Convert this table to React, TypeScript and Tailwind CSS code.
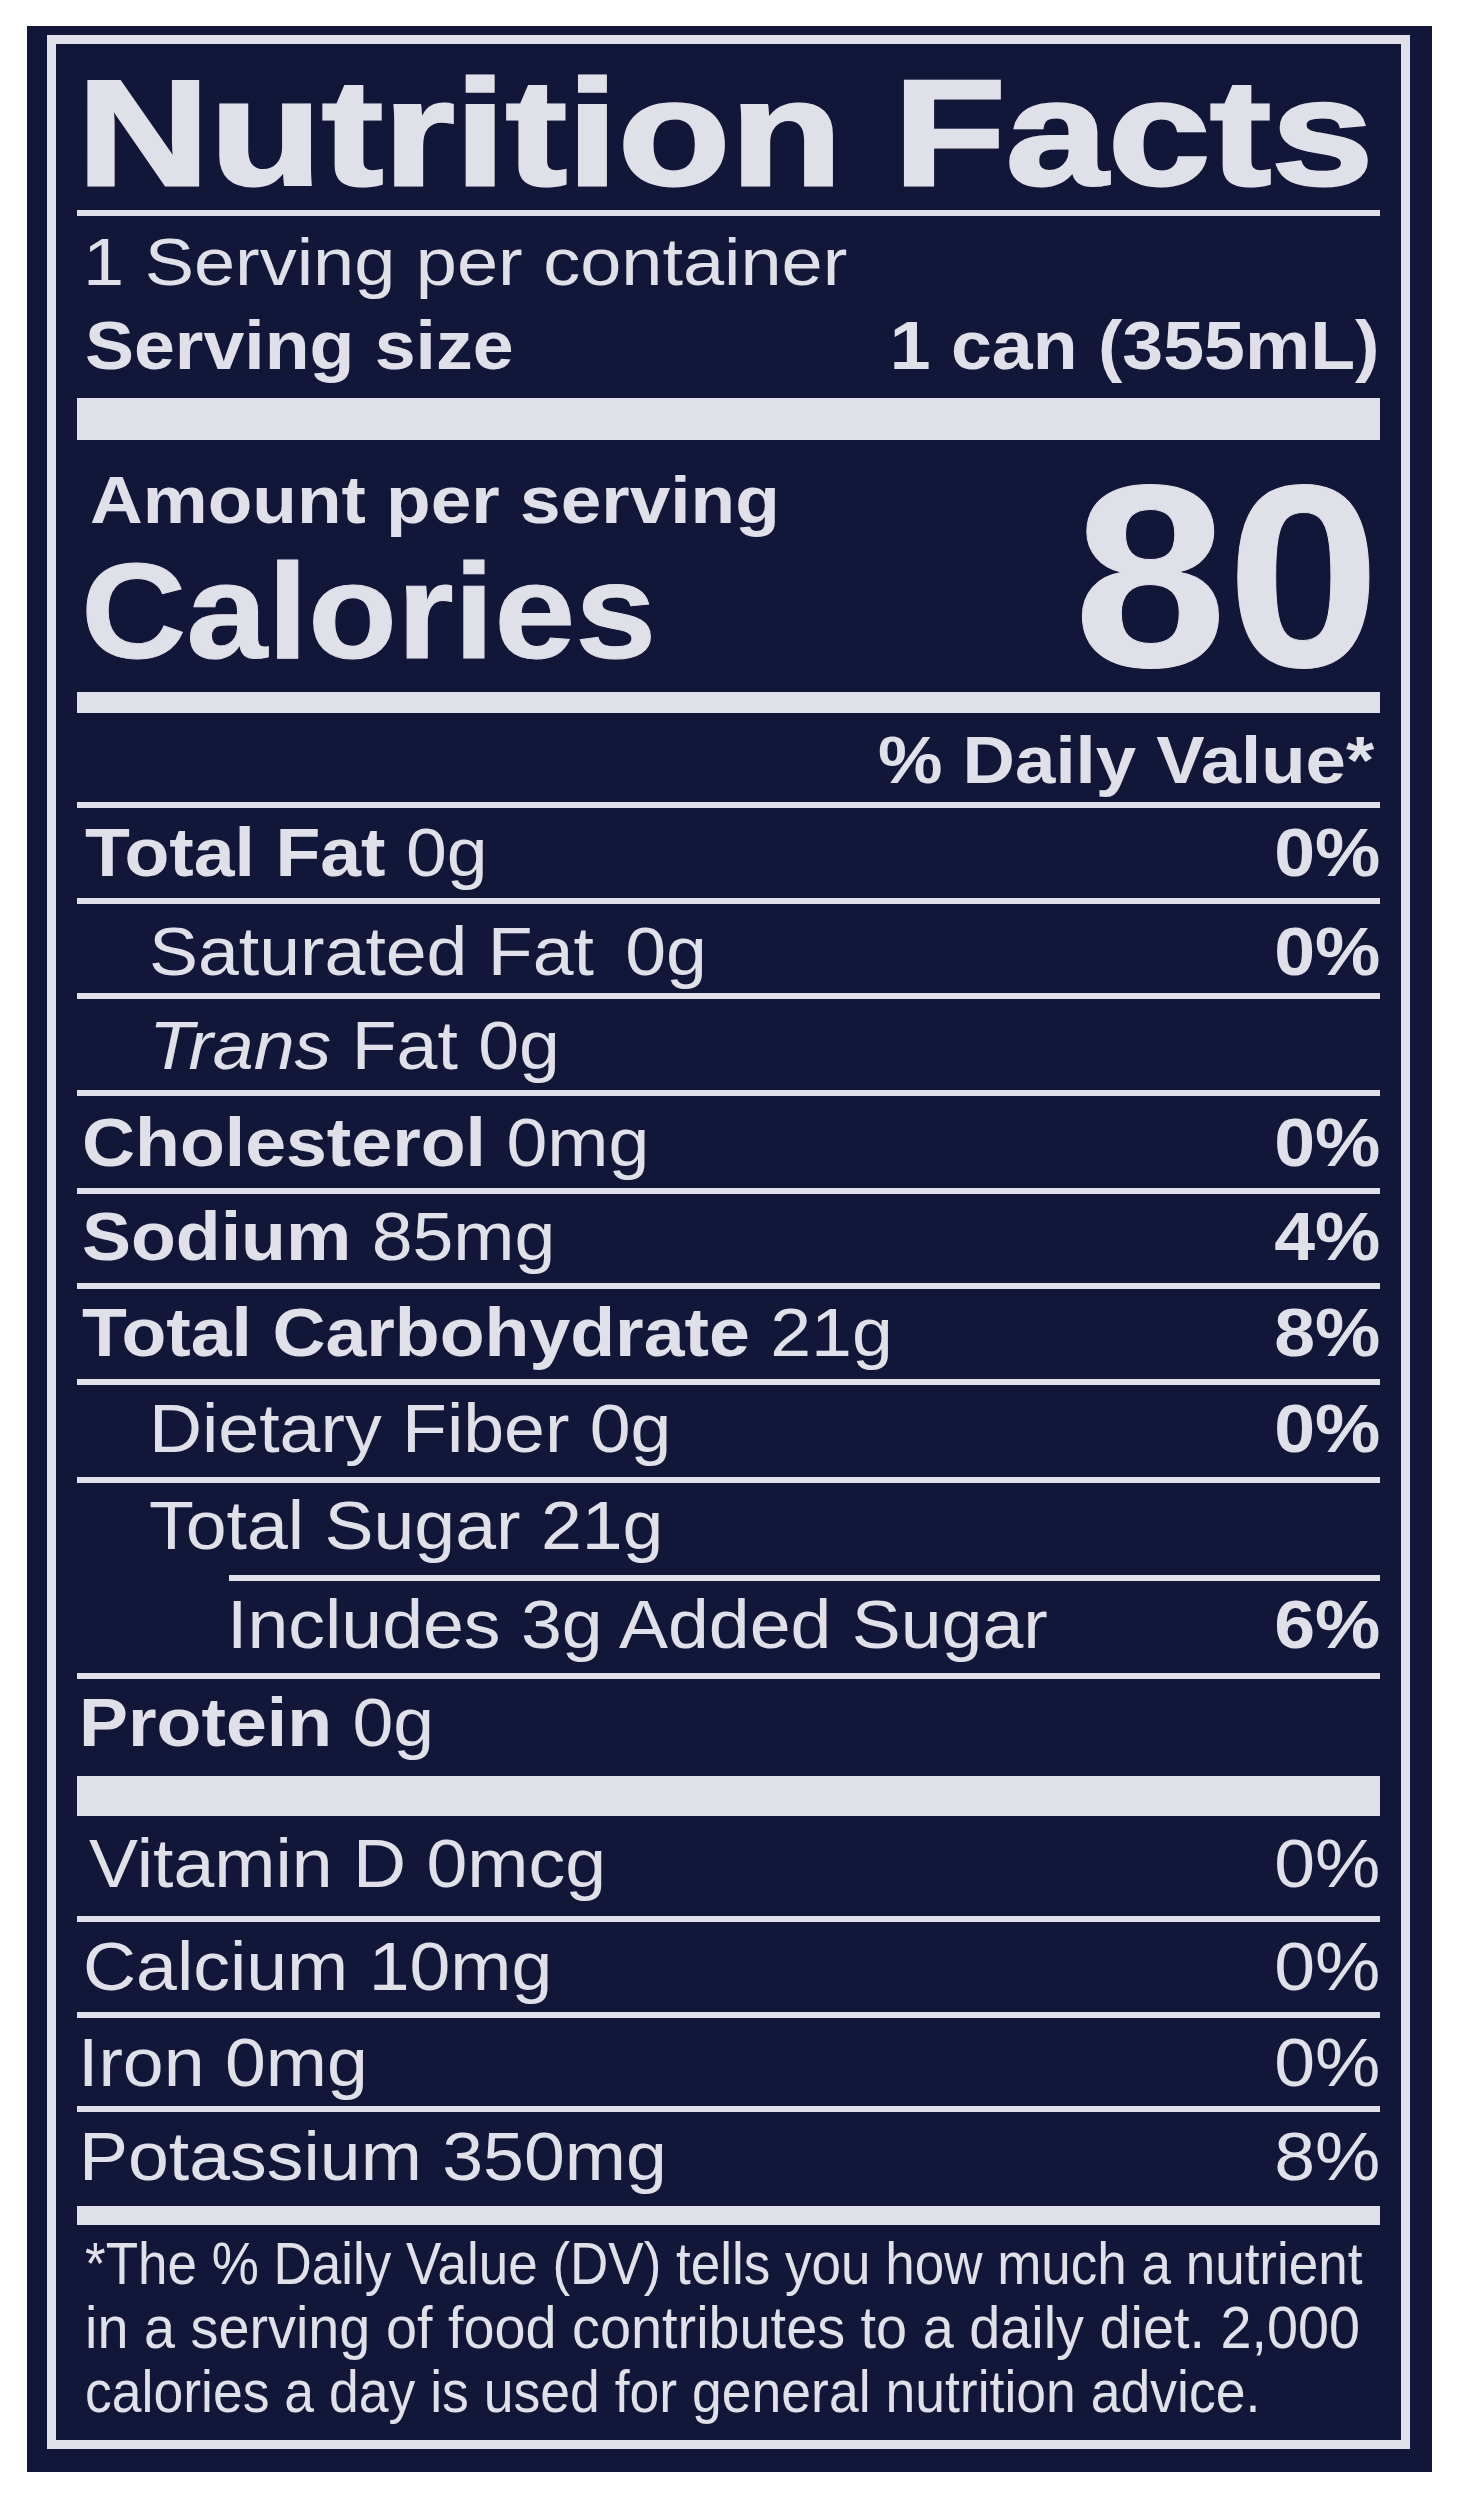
import React from "react";

const S = "inline-block whitespace-nowrap origin-left scale-x-[1.08]";
const SR = "inline-block whitespace-nowrap origin-right scale-x-[1.08]";

function Rule({ className = "" }: { className?: string }) {
  return <div className={"h-[6px] shrink-0 bg-[#e0e0e8] " + className} />;
}

type RowProps = {
  h: string;
  pad: string;
  left: React.ReactNode;
  right?: React.ReactNode;
  bold?: boolean;
};

function Row({ h, pad, left, right, bold = true }: RowProps) {
  return (
    <div
      className={
        "flex shrink-0 items-start justify-between text-[68px] leading-none " +
        h +
        " " +
        pad
      }
    >
      <span className={S}>{left}</span>
      {right !== undefined && (
        <span className={SR + (bold ? " font-bold" : "")}>{right}</span>
      )}
    </div>
  );
}

export default function App() {
  return (
    <div className="min-h-[2499px] bg-white pl-[27px] pt-[26px] font-['Liberation_Sans',Arial,sans-serif] text-[#e0e0e8]">
      <div className="h-[2446px] w-[1405px] bg-[#121638] pl-[20px] pt-[9px]">
        <div className="flex h-[2414px] w-[1363px] flex-col border-[9px] border-[#e0e0e8] px-[21px]">
          {/* Title */}
          <div className="mt-[14px] h-[150px] shrink-0 text-[150px] font-bold leading-none">
            <span className="inline-block origin-left scale-x-[1.225] whitespace-nowrap [-webkit-text-stroke:3px_#e0e0e8]">
              Nutrition Facts
            </span>
          </div>
          <Rule className="mt-[2px]" />

          <div className="mt-[13px] h-[66px] shrink-0 pl-[6px] text-[66px] leading-none">
            <span className="inline-block origin-left scale-x-[1.12] whitespace-nowrap">
              1 Serving per container
            </span>
          </div>
          <div className="mt-[16px] flex h-[68px] shrink-0 items-start justify-between pl-[8px] text-[68px] font-bold leading-none">
            <span className={S}>Serving size</span>
            <span className={SR}>1 can (355mL)</span>
          </div>

          <div className="mt-[19px] h-[42px] shrink-0 bg-[#e0e0e8]" />

          {/* Calories */}
          <div className="flex h-[252px] shrink-0 items-start justify-between">
            <div className="flex flex-col font-bold leading-none">
              <div className="mt-[26px] h-[67px] pl-[13px] text-[67px]">
                <span className="inline-block origin-left scale-x-[1.09] whitespace-nowrap">
                  Amount per serving
                </span>
              </div>
              <div className="mt-[11px] h-[135px] pl-[4px] text-[135px]">
                <span className="inline-block origin-left scale-x-[1.08] whitespace-nowrap [-webkit-text-stroke:1px_#e0e0e8]">
                  Calories
                </span>
              </div>
            </div>
            <div className="mt-[36px] h-[200px] text-[260px] font-bold leading-[200px]">
              <span className="inline-block origin-right scale-x-[1.06] [-webkit-text-stroke:1px_#e0e0e8]">
                80
              </span>
            </div>
          </div>

          <div className="h-[21px] shrink-0 bg-[#e0e0e8]" />

          <div className="mt-[14px] h-[66px] shrink-0 pr-[6px] text-right text-[66px] font-bold leading-none">
            <span className="inline-block origin-right scale-x-[1.1] whitespace-nowrap">
              % Daily Value*
            </span>
          </div>
          <Rule className="mt-[9px]" />

          <Row
            h="h-[90px]"
            pad="pt-[10px] pl-[8px]"
            left={
              <>
                <b>Total Fat</b> 0g
              </>
            }
            right="0%"
          />
          <Rule />
          <Row
            h="h-[89px]"
            pad="pt-[13px] pl-[72px]"
            left={
              <>
                Saturated Fat <span className="ml-[10px]">0g</span>
              </>
            }
            right="0%"
          />
          <Rule />
          <Row
            h="h-[91px]"
            pad="pt-[12px] pl-[72px]"
            left={
              <>
                <i>Trans</i> Fat 0g
              </>
            }
          />
          <Rule />
          <Row
            h="h-[92px]"
            pad="pt-[12px] pl-[5px]"
            left={
              <>
                <b>Cholesterol</b> 0mg
              </>
            }
            right="0%"
          />
          <Rule />
          <Row
            h="h-[89px]"
            pad="pt-[8px] pl-[5px]"
            left={
              <>
                <b>Sodium</b> 85mg
              </>
            }
            right="4%"
          />
          <Rule />
          <Row
            h="h-[90px]"
            pad="pt-[9px] pl-[5px]"
            left={
              <>
                <b>Total Carbohydrate</b> 21g
              </>
            }
            right="8%"
          />
          <Rule />
          <Row
            h="h-[92px]"
            pad="pt-[9px] pl-[72px]"
            left="Dietary Fiber 0g"
            right="0%"
          />
          <Rule />
          <Row h="h-[92px]" pad="pt-[8px] pl-[72px]" left="Total Sugar 21g" />
          <Rule className="ml-[152px]" />
          <Row
            h="h-[92px]"
            pad="pt-[9px] pl-[150px]"
            left="Includes 3g Added Sugar"
            right="6%"
          />
          <Rule />
          <Row
            h="h-[97px]"
            pad="pt-[9px] pl-[2px]"
            left={
              <>
                <b>Protein</b> 0g
              </>
            }
          />

          <div className="h-[40px] shrink-0 bg-[#e0e0e8]" />

          <Row
            h="h-[100px]"
            pad="pt-[13px] pl-[12px]"
            left="Vitamin D 0mcg"
            right="0%"
            bold={false}
          />
          <Rule />
          <Row
            h="h-[90px]"
            pad="pt-[10px] pl-[6px]"
            left="Calcium 10mg"
            right="0%"
            bold={false}
          />
          <Rule />
          <Row
            h="h-[88px]"
            pad="pt-[10px] pl-[1px]"
            left="Iron 0mg"
            right="0%"
            bold={false}
          />
          <Rule />
          <Row
            h="h-[94px]"
            pad="pt-[10px] pl-[2px]"
            left="Potassium 350mg"
            right="8%"
            bold={false}
          />

          <div className="h-[19px] shrink-0 bg-[#e0e0e8]" />

          <div className="mt-[7px] flex shrink-0 flex-col pl-[8px] text-[53px] leading-[64px]">
            <div className="h-[64px]">
              <span className="inline-block origin-left scale-x-[1.0] scale-y-[1.13] whitespace-nowrap">
                *The % Daily Value (DV) tells you how much a nutrient
              </span>
            </div>
            <div className="h-[64px]">
              <span className="inline-block origin-left scale-x-[1.053] scale-y-[1.13] whitespace-nowrap">
                in a serving of food contributes to a daily diet. 2,000
              </span>
            </div>
            <div className="h-[64px]">
              <span className="inline-block origin-left scale-x-[1.01] scale-y-[1.13] whitespace-nowrap">
                calories a day is used for general nutrition advice.
              </span>
            </div>
          </div>
        </div>
      </div>
    </div>
  );
}
